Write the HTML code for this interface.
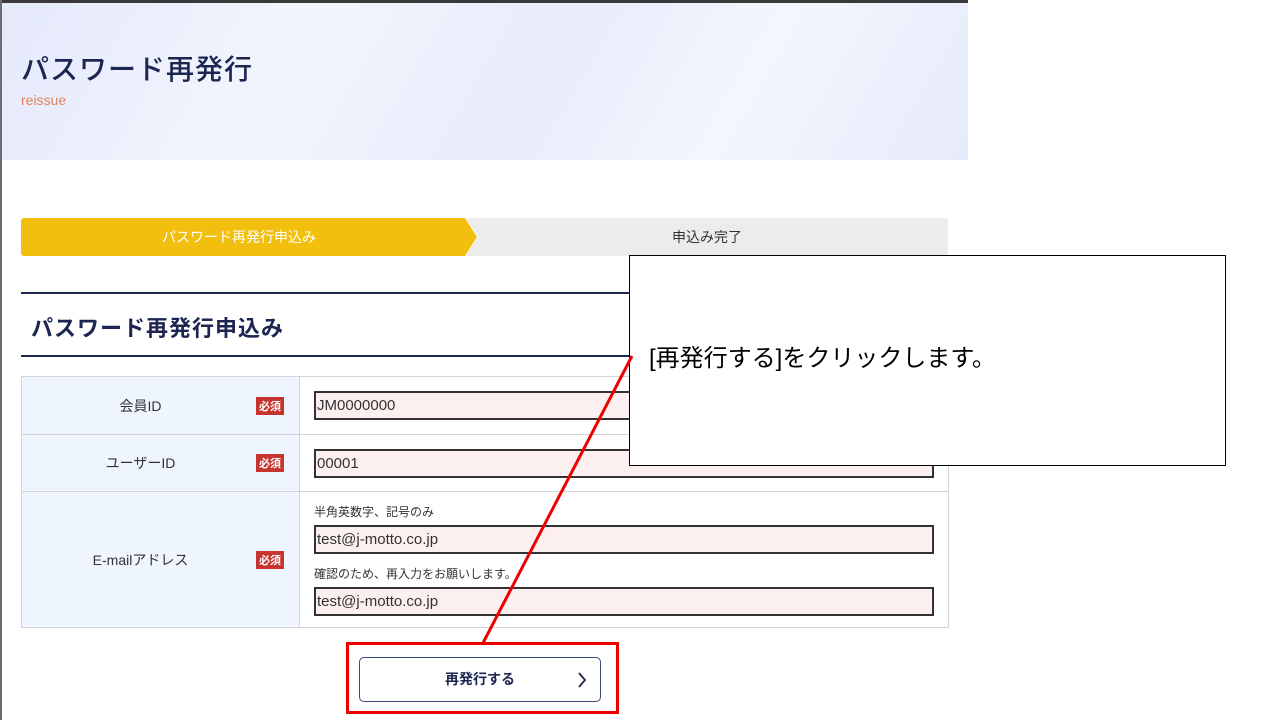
<!DOCTYPE html>
<html><head><meta charset="utf-8"><style>
*{margin:0;padding:0;box-sizing:border-box}
body{width:1280px;height:720px;position:relative;overflow:hidden;background:#fff;font-family:"Liberation Sans","Noto Sans CJK JP",sans-serif;}
.abs{position:absolute}
.hero{left:0;top:0;width:968px;height:160px;background:linear-gradient(120deg,#e4e9fb 0%,#f3f5fd 30%,#e8ecfb 55%,#f4f6fe 75%,#e6eafa 100%);border-top:3px solid #3a3a3a}
.lb{left:0;top:0;width:2px;height:720px;background:#6d6a72}
h1{position:absolute;left:21px;top:48px;font-size:28px;color:#1c2650;font-weight:500;letter-spacing:1px}
.sub{left:21px;top:92px;font-size:14px;color:#e2845c}
.step1{left:21px;top:218px;width:456px;height:38px;background:#f2bf0f;color:#fff;font-size:14px;text-align:center;line-height:38px;clip-path:polygon(0 0,444px 0,456px 19px,444px 38px,0 38px);border-radius:3px 0 0 3px;padding-right:20px}
.step2{left:466px;top:218px;width:482px;height:38px;background:#ececec;color:#333;font-size:14px;text-align:center;line-height:38px;clip-path:polygon(0 0,100% 0,100% 100%,0 100%,12px 19px);border-radius:0 3px 3px 0}
.hl{left:21px;width:927px;height:2px;background:#1c2650}
h2{position:absolute;left:31px;top:311px;font-size:22px;color:#1c2650;font-weight:bold;letter-spacing:1px}
table{position:absolute;left:21px;top:376px;width:928px;border-collapse:collapse}
td{border:1px solid #d4d4d4;font-size:14px;color:#333}
td.l{background:#eef5fe;width:278px;position:relative;text-align:center;padding-right:40px}
.req{position:absolute;left:234px;background:#c7332f;color:#fff;font-size:11px;font-weight:bold;padding:1px 3px;top:50%;transform:translateY(-50%)}
.in{margin-left:14px;width:620px;height:29px;border:2px solid #333;background:#fcefef;font-size:15px;line-height:25px;padding-left:1px;color:#333}
.note{margin-left:14px;font-size:12px;color:#333}
.btn{left:359px;top:657px;width:242px;height:45px;border:1px solid #3b4a7a;border-radius:5px;text-align:center;line-height:43px;font-size:14px;font-weight:bold;color:#1c2650}
.redbox{left:346px;top:642px;width:273px;height:72px;border:3px solid #e00}
.call{left:629px;top:255px;width:597px;height:211px;border:1px solid #000;background:#fff;font-size:24px;padding:82px 0 0 19px;color:#000}
</style></head><body>
<div class="abs hero"></div>
<div class="abs lb"></div>
<h1>パスワード再発行</h1>
<div class="abs sub">reissue</div>
<div class="abs step1">パスワード再発行申込み</div>
<div class="abs step2">申込み完了</div>
<div class="abs hl" style="top:292px"></div>
<h2>パスワード再発行申込み</h2>
<div class="abs hl" style="top:355px"></div>
<table>
<tr style="height:58px"><td class="l">会員ID<span class="req">必須</span></td><td><div class="in">JM0000000</div></td></tr>
<tr style="height:57px"><td class="l">ユーザーID<span class="req">必須</span></td><td><div class="in">00001</div></td></tr>
<tr style="height:136px"><td class="l">E-mailアドレス<span class="req">必須</span></td><td>
<div class="note" style="margin-top:6px">半角英数字、記号のみ</div>
<div class="in" style="margin-top:5px">test@j-motto.co.jp</div>
<div class="note" style="margin-top:11px">確認のため、再入力をお願いします。</div>
<div class="in" style="margin-top:5px;margin-bottom:6px">test@j-motto.co.jp</div>
</td></tr>
</table>
<div class="abs btn">再発行する<svg style="position:absolute;right:13px;top:14px" width="10" height="16" viewBox="0 0 10 16"><path d="M2 1 L8 8 L2 15" fill="none" stroke="#1c2650" stroke-width="1.8"/></svg></div>
<div class="abs redbox"></div>
<div class="abs call">[再発行する]をクリックします。</div>
<svg class="abs" style="left:0;top:0" width="1280" height="720"><line x1="483" y1="643" x2="632" y2="356" stroke="#e00" stroke-width="3"/></svg>
</body></html>
